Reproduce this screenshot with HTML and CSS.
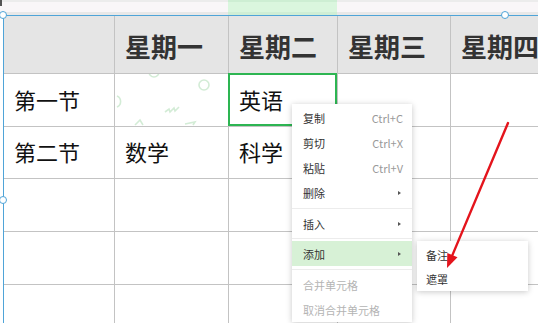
FILE: index.html
```html
<!DOCTYPE html>
<html lang="zh">
<head>
<meta charset="utf-8">
<link rel="stylesheet" href="styles.css">
</head>
<body>
<div class="sheet">
  <div class="colbar">
    <div class="colbar-seg"></div>
    <div class="colbar-seg colbar-active"></div>
    <div class="colbar-seg"></div>
  </div>
  <div class="table">
    <div class="cell head"></div>
    <div class="cell head">星期一</div>
    <div class="cell head">星期二</div>
    <div class="cell head">星期三</div>
    <div class="cell head">星期四</div>

    <div class="cell">第一节</div>
    <div class="cell pattern">
      <svg class="pattern-svg" width="113" height="52" viewBox="0 0 113 52">
        <g fill="none" stroke="#d3ecd6" stroke-width="1.6">
          <circle cx="89" cy="11" r="5"/>
          <path d="M2 22 a6 6 0 0 1 0 11"/>
          <path d="M34 -2 a5 5 0 0 0 10 0"/>
          <path d="M50 38 l4 -3 l1 3 l4 -4 l1 3 l4 -4"/>
          <path d="M20 51 l5 -5 l3 5"/>
          <path d="M70 50 l10 -2 l-2 3"/>
        </g>
      </svg>
    </div>
    <div class="cell selected">英语</div>
    <div class="cell"></div>
    <div class="cell"></div>

    <div class="cell">第二节</div>
    <div class="cell">数学</div>
    <div class="cell">科学</div>
    <div class="cell"></div>
    <div class="cell"></div>

    <div class="cell"></div><div class="cell"></div><div class="cell"></div><div class="cell"></div><div class="cell"></div>
    <div class="cell"></div><div class="cell"></div><div class="cell"></div><div class="cell"></div><div class="cell"></div>
    <div class="cell"></div><div class="cell"></div><div class="cell"></div><div class="cell"></div><div class="cell"></div>
  </div>

  <div class="corner-mark"></div>
  <div class="handle handle-tl"></div>
  <div class="handle handle-tr"></div>
  <div class="handle handle-ml"></div>

  <div class="menu">
    <div class="menu-item"><span>复制</span><span class="shortcut">Ctrl+C</span></div>
    <div class="menu-item"><span>剪切</span><span class="shortcut">Ctrl+X</span></div>
    <div class="menu-item"><span>粘贴</span><span class="shortcut">Ctrl+V</span></div>
    <div class="menu-item"><span>删除</span><span class="caret"></span></div>
    <div class="menu-sep"></div>
    <div class="menu-item"><span>插入</span><span class="caret"></span></div>
    <div class="menu-sep small"></div>
    <div class="menu-item active"><span>添加</span><span class="caret"></span></div>
    <div class="menu-sep"></div>
    <div class="menu-item disabled"><span>合并单元格</span></div>
    <div class="menu-item disabled"><span>取消合并单元格</span></div>
  </div>

  <div class="submenu">
    <div class="submenu-item">备注</div>
    <div class="submenu-item">遮罩</div>
  </div>

  <svg class="arrow" width="538" height="323" viewBox="0 0 538 323">
    <line x1="508" y1="123" x2="452.4" y2="255.1" stroke="#e4141c" stroke-width="2.4" stroke-linecap="round"/>
    <polygon points="447,268 457.5,257.2 447.3,253" fill="#e4141c"/>
  </svg>
</div>
</body>
</html>
```

FILE: styles.css
```css
* { box-sizing: border-box; }
html, body { margin: 0; padding: 0; background: #ffffff; }
body {
  font-family: "Noto Sans CJK SC", "Noto Sans", sans-serif;
  color: #111;
}
.sheet {
  position: relative;
  width: 538px;
  height: 323px;
  overflow: hidden;
  background: #fff;
}
.colbar {
  height: 15px;
  display: grid;
  grid-template-columns: 228px 109px 1fr;
}
.colbar-seg {
  background: linear-gradient(#ececec 0, #ececec 2px, #f9f6f8 2px, #f9f6f8 12px, #e8e8e8 12px);
}
.colbar-active {
  background: linear-gradient(#cdeed3 0, #cdeed3 2px, #daf6de 2px, #daf6de 12px, #cfeed5 12px);
}
.table {
  margin-left: 3px;
  border-left: 1px solid #4fa4d8;
  border-top: 1px solid #4fa4d8;
  display: grid;
  grid-template-columns: 111px 114px 109px 113px 113px;
  grid-template-rows: 58px 53px 52px 53px 53px 53px;
}
.cell {
  position: relative;
  border-right: 1px solid #c3c3c3;
  border-bottom: 1px solid #c3c3c3;
  display: flex;
  align-items: center;
  padding-left: 10px;
  padding-bottom: 3px;
  font-size: 22px;
  line-height: 1;
  white-space: nowrap;
  color: #111;
}
.head {
  background: #e5e5e5;
  font-size: 26px;
  font-weight: 700;
  color: #333;
  padding-left: 10px;
  padding-top: 3px;
  padding-bottom: 0;
}
.pattern-svg {
  position: absolute;
  left: 0;
  top: 0;
}
.selected::after {
  content: "";
  position: absolute;
  left: -1px;
  top: -1px;
  right: 0;
  bottom: 0;
  border: 2px solid #2db552;
}
.corner-mark {
  position: absolute;
  left: 0;
  top: 0;
  width: 2px;
  height: 6px;
  background: #555;
}
.handle {
  position: absolute;
  width: 8px;
  height: 8px;
  border-radius: 50%;
  border: 1.5px solid #4fa4d8;
  background: #fff;
}
.handle-tl { left: -1px; top: 11px; }
.handle-tr { left: 501px; top: 11px; }
.handle-ml { left: -1px; top: 196px; }

.menu {
  position: absolute;
  left: 292px;
  top: 104px;
  width: 120px;
  padding-top: 1px;
  background: #fff;
  box-shadow: 0 1px 6px rgba(0, 0, 0, 0.22);
  font-size: 11px;
  color: #333;
}
.menu-item {
  height: 25px;
  display: flex;
  align-items: center;
  justify-content: space-between;
  padding: 0 9px 0 11px;
}
.menu-item.active { background: #d7f1d6; }
.menu-item.disabled { color: #b4b4b4; }
.shortcut { color: #9a9a9a; }
.caret {
  width: 0;
  height: 0;
  border-top: 2.5px solid transparent;
  border-bottom: 2.5px solid transparent;
  border-left: 3px solid #555;
  margin-right: 2px;
}
.menu-sep {
  height: 6px;
  border-bottom: 1px solid #ececec;
  margin-bottom: 0;
  transform: translateY(-2px);
}
.menu-sep.small { height: 5px; }
.submenu {
  position: absolute;
  left: 417px;
  top: 241px;
  width: 111px;
  height: 50px;
  padding-top: 2px;
  background: #fff;
  box-shadow: 0 1px 6px rgba(0, 0, 0, 0.22);
  font-size: 11px;
  color: #333;
}
.submenu-item {
  height: 24px;
  display: flex;
  align-items: center;
  padding-left: 9px;
}
.arrow {
  position: absolute;
  left: 0;
  top: 0;
  pointer-events: none;
}
```
